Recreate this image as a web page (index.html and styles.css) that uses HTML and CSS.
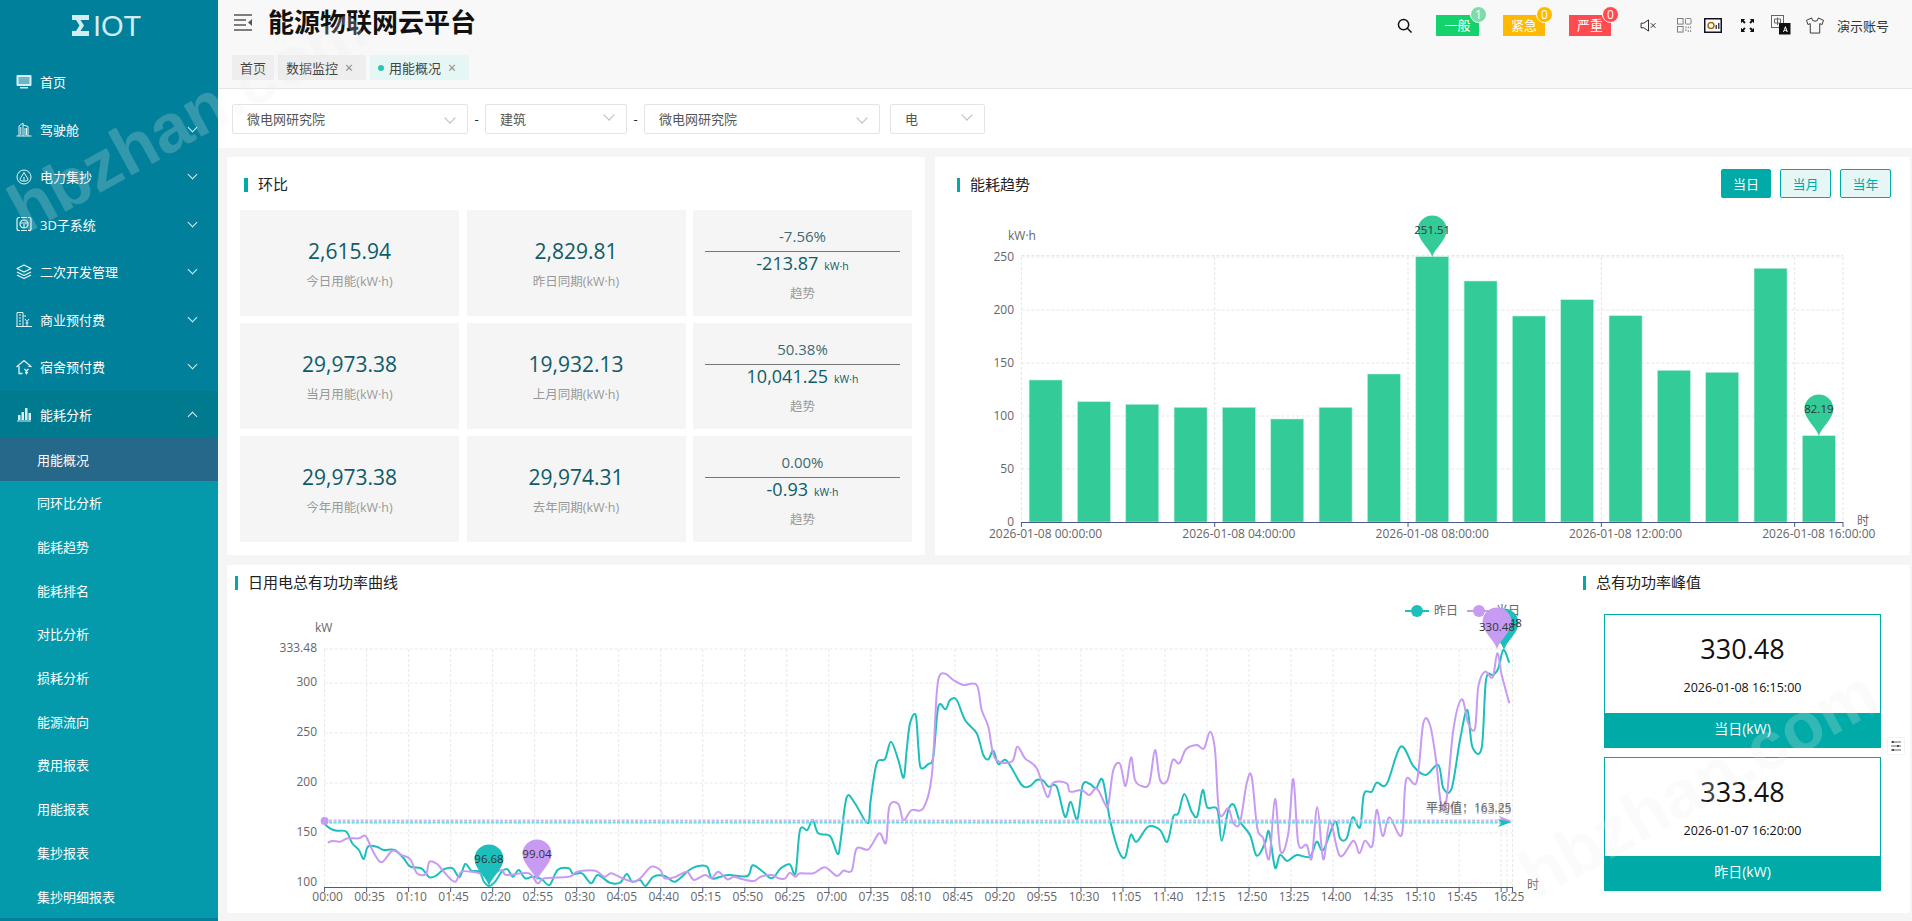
FILE: index.html
```html
<!DOCTYPE html>
<html lang="zh-CN">
<head>
<meta charset="utf-8">
<title>能源物联网云平台</title>
<link rel="stylesheet" href="styles.css">
</head>
<body>
<aside class="side">
  <div class="logo"><svg class="logo-x" viewBox="0 0 17 21"><path d="M0 0h17v5H8.500l3.500 5.500L8.500 16H17v5H0v-5h4l3.500-5.500L4 5H0z" fill="#d3ecef"/></svg>IOT</div>
  <nav class="menu">
    <a class="item"><svg class="ico" viewBox="0 0 16 16"><rect x=".5" y="1" width="15" height="11" rx="1" fill="#d6eef2"/><rect x="2.500" y="3" width="11" height="7" fill="#6db7c4"/><path d="M4 13h8v1.500H4z" fill="#d6eef2"/></svg><span>首页</span></a>
    <a class="item"><svg class="ico" viewBox="0 0 16 16" fill="none" stroke="#e4f4f6"><path d="M.5 15h15M3 15V5l4-3v13M7 4l5 1.500V15M9 7v7M10.500 7v7M4.800 6v8"/></svg><span>驾驶舱</span><i class="chev"></i></a>
    <a class="item"><svg class="ico" viewBox="0 0 16 16" fill="none" stroke="#e4f4f6"><circle cx="8" cy="8" r="7"/><path d="M8 3.500l4 6.500a2 2 0 0 1-2 2H6a2 2 0 0 1-2-2z"/><path d="M8 8v4"/></svg><span>电力集抄</span><i class="chev"></i></a>
    <a class="item"><svg class="ico" viewBox="0 0 16 16" fill="none" stroke="#e4f4f6" stroke-width="1.2"><path d="M4 1.500H3A2 2 0 0 0 1 3.500v9a2 2 0 0 0 2 2h1M12 1.500h1a2 2 0 0 1 2 2v9a2 2 0 0 1-2 2h-1M5 1.500h6M5 14.500h6"/><circle cx="8" cy="8" r="4"/><path d="M4.500 7h7M8 8v4"/></svg><span>3D子系统</span><i class="chev"></i></a>
    <a class="item"><svg class="ico" viewBox="0 0 16 16" fill="none" stroke="#e4f4f6" stroke-width="1.3" stroke-linejoin="round"><path d="M8 1l7 3.500L8 8 1 4.500z"/><path d="M1 8l7 3.500L15 8"/><path d="M1 11l7 3.500L15 11"/></svg><span>二次开发管理</span><i class="chev"></i></a>
    <a class="item"><svg class="ico" viewBox="0 0 16 16" fill="none" stroke="#e4f4f6"><path d="M0 15.500h16M1 15V1.500h6V15M3 4h2M3 7h2M3 10h2M3 13h2M7 5h3M9 8l2 2.500L13 8M11 10.500V15M9.500 12h3"/></svg><span>商业预付费</span><i class="chev"></i></a>
    <a class="item"><svg class="ico" viewBox="0 0 16 16" fill="none" stroke="#e4f4f6" stroke-width="1.3"><path d="M.5 8L8 1.500 15.500 8M3 7v7.500h3.500M13 7v1"/><path d="M8.500 10l2 2 2-2M10.500 12v3.500M9 13.500h3"/></svg><span>宿舍预付费</span><i class="chev"></i></a>
    <a class="item open"><svg class="ico" viewBox="0 0 16 16" fill="#d6eef2"><path d="M1 14.500h14v1H1z"/><rect x="2" y="9" width="2.500" height="5"/><rect x="5.500" y="6" width="2.500" height="8"/><rect x="9" y="2" width="2.500" height="12"/><rect x="12.500" y="7" width="2.500" height="7"/></svg><span>能耗分析</span><i class="chev up"></i></a>
    <div class="sub">
      <a class="sub-item on">用能概况</a>
      <a class="sub-item">同环比分析</a>
      <a class="sub-item">能耗趋势</a>
      <a class="sub-item">能耗排名</a>
      <a class="sub-item">对比分析</a>
      <a class="sub-item">损耗分析</a>
      <a class="sub-item">能源流向</a>
      <a class="sub-item">费用报表</a>
      <a class="sub-item">用能报表</a>
      <a class="sub-item">集抄报表</a>
      <a class="sub-item">集抄明细报表</a>
    </div>
  </nav>
</aside>

<main class="main">
  <header class="top">
    <div class="top-row">
      <svg class="burger" viewBox="0 0 19 17" fill="none" stroke="#555" stroke-width="1.4"><path d="M0 1h18M0 6h12M0 11h12M0 16h18"/><path d="M18 5l-4 3.500 4 3.500z" fill="#555" stroke="none"/></svg>
      <h1 class="brand">能源物联网云平台</h1>
      <div class="tools">
        <svg class="search" viewBox="0 0 16 16" fill="none" stroke="#111" stroke-width="1.6"><circle cx="7" cy="7" r="5.500"/><path d="M11 11l4.500 4.500"/></svg>
        <div class="alarm green">一般<b class="dot pale">1</b></div>
        <div class="alarm amber">紧急<b class="dot amber">0</b></div>
        <div class="alarm red">严重<b class="dot red">0</b></div>
        <svg class="tool t-mute" viewBox="0 0 18 14" fill="none" stroke="#222"><path d="M1 4.500h3L9 1v12L4 9.500H1zM11.500 4.500l5 5M16.500 4.500l-5 5"/></svg>
        <svg class="tool t-qr" viewBox="0 0 16 16" fill="none" stroke="#777"><rect x=".5" y=".5" width="6" height="6"/><rect x="9" y=".5" width="6" height="6" rx="1"/><rect x=".5" y="9" width="6" height="6"/><path d="M9.500 9v6M12 9v2M12 13v2M14.500 9v2M14.500 13v2" stroke-dasharray="2 1"/></svg>
        <svg class="tool t-dash" viewBox="0 0 18 15"><rect x=".75" y=".75" width="16.500" height="13.500" fill="#fff" stroke="#112" stroke-width="1.500"/><circle cx="7" cy="7.500" r="3" fill="none" stroke="#b06a10" stroke-width="1.500"/><path d="M11.500 11V7h1.500v4zM14 11V5h1.500v6z" fill="#445"/></svg>
        <svg class="tool t-full" viewBox="0 0 14 14" fill="#111"><path d="M0 0h4.500L3 1.500 5 3.500 3.500 5 1.500 3 0 4.500zM14 0v4.500L12.500 3l-2 2L9 3.500l2-2L9.500 0zM0 14V9.500L1.500 11l2-2L5 10.500l-2 2L4.500 14zM14 14H9.500l1.500-1.500-2-2L10.500 9l2 2L14 9.500z"/></svg>
        <svg class="tool t-lang" viewBox="0 0 20 20"><rect x=".5" y=".5" width="12" height="12" fill="#f8f8f8" stroke="#666"/><rect x="8" y="8" width="11.500" height="11.500" fill="#111"/><path d="M3.500 4h6v4h-6zM6.500 2.500v7.500" fill="none" stroke="#666"/><path d="M12 17l2-5.500h.8L16.800 17h-1.200l-.4-1.200h-1.900l-.4 1.200zM13.600 14.900h1.300l-.6-1.900z" fill="#fff"/></svg>
        <svg class="tool t-shirt" viewBox="0 0 20 18" fill="none" stroke="#333"><path d="M6.500 1L1 3.500 2.500 8 5 7v10h10V7l2.500 1L19 3.500 13.500 1a3.500 3.500 0 0 1-7 0z"/></svg>
        <span class="user">演示账号</span>
      </div>
    </div>
    <div class="tabs">
      <a class="tab">首页</a>
      <a class="tab">数据监控<i class="x">×</i></a>
      <a class="tab active"><i class="tab-dot"></i>用能概况<i class="x">×</i></a>
    </div>
  </header>

  <div class="filters">
    <div class="sel s1">微电网研究院<i class="sel-chev"></i></div>
    <span class="dash">-</span>
    <div class="sel s2">建筑<i class="sel-chev high"></i></div>
    <span class="dash">-</span>
    <div class="sel s1">微电网研究院<i class="sel-chev"></i></div>
    <div class="sel s3">电<i class="sel-chev high"></i></div>
  </div>

  <div class="content">
    <div class="row-top">
      <section class="card card-ratio">
        <h2 class="ttl">环比</h2>
        <div class="tiles">
          <div class="tile"><div class="num">2,615.94</div><div class="lab">今日用能(kW·h)</div></div>
          <div class="tile"><div class="num">2,829.81</div><div class="lab">昨日同期(kW·h)</div></div>
          <div class="tile trend"><div class="pct">-7.56%</div><div class="val">-213.87<small>kW·h</small></div><div class="lab">趋势</div></div>
          <div class="tile"><div class="num">29,973.38</div><div class="lab">当月用能(kW·h)</div></div>
          <div class="tile"><div class="num">19,932.13</div><div class="lab">上月同期(kW·h)</div></div>
          <div class="tile trend"><div class="pct">50.38%</div><div class="val">10,041.25<small>kW·h</small></div><div class="lab">趋势</div></div>
          <div class="tile"><div class="num">29,973.38</div><div class="lab">今年用能(kW·h)</div></div>
          <div class="tile"><div class="num">29,974.31</div><div class="lab">去年同期(kW·h)</div></div>
          <div class="tile trend"><div class="pct">0.00%</div><div class="val">-0.93<small>kW·h</small></div><div class="lab">趋势</div></div>
        </div>
      </section>
      <section class="card card-trend">
        <div class="trend-head">
          <h2 class="ttl flat">能耗趋势</h2>
          <div class="btns"><button class="btn on">当日</button><button class="btn">当月</button><button class="btn">当年</button></div>
        </div>
        <svg id="barChart" class="chart" viewBox="935 198 975 357"></svg>
      </section>
    </div>
    <section class="card row-bottom">
      <div class="power">
        <h2 class="ttl low">日用电总有功功率曲线</h2>
        <svg id="lineChart" class="chart line" viewBox="227 600 1343 313"></svg>
      </div>
      <div class="peak">
        <h2 class="ttl low">总有功功率峰值</h2>
        <div class="peak-box"><div class="peak-body"><div class="peak-num">330.48</div><div class="peak-time">2026-01-08 16:15:00</div></div><div class="peak-foot">当日(kW)</div></div>
        <div class="peak-box"><div class="peak-body"><div class="peak-num">333.48</div><div class="peak-time">2026-01-07 16:20:00</div></div><div class="peak-foot">昨日(kW)</div></div>
      </div>
    </section>
  </div>
</main>

<div class="float-tool"><svg viewBox="0 0 12 12" fill="none" stroke="#666" stroke-width="1.2"><path d="M1 2h10M1 6h10M1 10h10"/><path d="M3 1v2M8 5v2M3 9v2" stroke="#333" stroke-width="1.600"/></svg></div>
<div class="mark mark-a">hbzhan.com</div>
<div class="mark mark-b">hbzhan.com</div>
<script src="chart.js"></script>
</body>
</html>
```
FILE: styles.css
```css
* { box-sizing: border-box; }
html, body { margin: 0; height: 921px; overflow: hidden; }
body {
  display: flex;
  position: relative;
  background: #f5f5f5;
  font-family: "Open Sans", "Noto Sans CJK SC", sans-serif;
  color: #333;
}
i { font-style: normal; }
h1, h2 { margin: 0; font-weight: 400; }

/* sidebar */
.side { width: 218px; flex: none; height: 921px; overflow: hidden; background: #00809a; color: #fff; }
.logo { height: 58px; padding: 9px 0 0 72px; display: flex; align-items: flex-start; font: 400 29px/34px "Liberation Sans", sans-serif; color: #d3ecef; }
.logo-x { width: 17px; height: 21px; margin: 6px 4px 0 0; flex: none; }
.item { height: 47.500px; display: flex; align-items: center; padding-left: 16px; font-size: 13px; position: relative; }
.item span { margin-left: 8px; }
.item.open { background: #007a8e; }
.ico { width: 16px; height: 16px; flex: none; }
.chev { position: absolute; left: 189px; top: 18px; width: 7px; height: 7px; border-right: 1px solid #d7eef1; border-bottom: 1px solid #d7eef1; transform: rotate(45deg); }
.chev.up { top: 22px; transform: rotate(225deg); }
.sub { background: #059aab; }
.sub-item { display: flex; align-items: center; height: 43.700px; padding-left: 37px; font-size: 13px; }
.sub-item.on { height: 43px; background: #25688a; }

/* main */
.main { flex: 1; min-width: 0; display: flex; flex-direction: column; }
.top { height: 89px; background: #f8f8f8; border-bottom: 1px solid #e6e6e6; padding-left: 14px; }
.top-row { display: flex; align-items: center; height: 50px; }
.burger { width: 19px; height: 17px; margin: -6px 0 0 2px; flex: none; }
.brand { margin: -8px 0 0 15px; font-size: 26px; font-weight: 700; color: #111; font-family: "Noto Sans CJK SC", sans-serif; line-height: 42px; }
.tools { margin-left: auto; display: flex; align-items: center; height: 50px; position: relative; width: 515px; flex: none; }
.search { width: 15px; height: 15px; flex: none; }
.alarm { position: relative; height: 21px; line-height: 21px; text-align: center; color: #fff; font-size: 13px; width: 43px; flex: none; }
.alarm.green { background: #14d26c; margin-left: 24px; }
.alarm.amber { background: #ffb900; margin-left: 24px; width: 42px; }
.alarm.red { background: #ff4b4f; margin-left: 24px; width: 42px; }
.dot { position: absolute; right: -8px; top: -9px; width: 17px; height: 17px; border-radius: 50%; border: 1px solid #fff; font: 400 12px/15px "Open Sans", sans-serif; color: #fff; text-align: center; }
.dot.pale { background: #7fdca8; }
.dot.amber { background: #ffb900; }
.dot.red { background: #ff4b4f; }
.tool { flex: none; }
.t-mute { width: 17px; height: 13px; margin-left: 29px; }
.t-qr { width: 15px; height: 15px; margin-left: 20px; }
.t-dash { width: 18px; height: 15px; margin-left: 12px; }
.t-full { width: 13px; height: 13px; margin-left: 19px; }
.t-lang { width: 20px; height: 20px; margin-left: 17px; }
.t-shirt { width: 20px; height: 17px; margin-left: 14px; }
.user { font-size: 13px; margin-left: 12px; color: #333; white-space: nowrap; }
.tabs { display: flex; gap: 4px; height: 25px; margin-top: 5px; }
.tab { display: flex; align-items: center; padding: 0 8px; background: #eeeeee; font-size: 13px; color: #444; }
.tab .x { font-size: 14px; color: #888; margin: 0 5px 0 7px; }
.tab.active { background: #e6f6f4; color: #444; }
.tab-dot { width: 6px; height: 6px; border-radius: 50%; background: #2dc4b8; margin-right: 5px; }

.filters { height: 59px; background: #fff; display: flex; align-items: center; padding-left: 14px; }
.sel { position: relative; height: 30px; line-height: 28px; border: 1px solid #e2e4e8; border-radius: 2px; padding-left: 14px; font-size: 13px; color: #555; flex: none; }
.s1 { width: 236px; }
.s2 { width: 142px; }
.s3 { width: 95px; margin-left: 10px; }
.dash { width: 17px; text-align: center; font-size: 13px; color: #222; }
.sel-chev { position: absolute; right: 13px; top: 9px; width: 8px; height: 8px; border-right: 1px solid #bbb; border-bottom: 1px solid #bbb; transform: rotate(45deg); }
.sel-chev.high { top: 6px; }

.content { flex: 1; min-height: 0; padding: 9px 2px 0 9px; display: flex; flex-direction: column; gap: 10px; }
.row-top { display: grid; grid-template-columns: 698px 1fr; gap: 10px; height: 398px; flex: none; }
.card { background: #fff; }
.ttl { display: flex; align-items: center; height: 16px; font-size: 15px; color: #222; }
.ttl::before { content: ""; width: 4px; height: 14px; background: #00aaa6; margin: 4px 10px 0 0; flex: none; }
.card-ratio { padding: 18px 13px 0; }
.card-ratio .ttl { margin-left: 4px; }
.tiles { margin-top: 19px; display: grid; grid-template-columns: repeat(3, 219px); grid-auto-rows: 106px; column-gap: 7.500px; row-gap: 7px; }
.tile { background: #f5f5f5; text-align: center; padding-top: 27px; }
.num { font-size: 21px; line-height: 28px; color: #0f5c68; }
.lab { font-size: 12.500px; line-height: 18px; color: #999; margin-top: 8px; }
.trend { padding-top: 16px; }
.pct { margin: 0 12px; padding-bottom: 5px; border-bottom: 1px solid #777; font-size: 15px; line-height: 20px; color: #3e6b72; }
.val { font-size: 18px; line-height: 26px; margin-top: -2px; color: #0f5c68; }
.val small { font-size: 10.500px; margin-left: 6px; }
.trend .lab { margin-top: 6px; }

.card-trend { display: flex; flex-direction: column; }
.trend-head { height: 41px; flex: none; display: flex; justify-content: space-between; padding: 12px 19px 0 22px; }
.ttl.flat { height: 16px; margin-top: 6px; }
.ttl.flat::before, .ttl.low::before { width: 3px; }
.btns { display: flex; gap: 9px; }
.btn { width: 51px; height: 29px; border: 1px solid #00aaa6; border-radius: 2px; background: #e6f6f4; color: #00aaa6; font: 13px "Noto Sans CJK SC", sans-serif; padding: 0; }
.btn.on { background: #00aaa6; color: #fff; width: 50px; }
.chart { display: block; }
#barChart { width: 975px; height: 357px; }

.row-bottom { height: 348px; flex: none; display: flex; }
.power { width: 1343px; flex: none; padding-top: 8px; }
.power .ttl { margin-left: 8px; }
.line { width: 1343px; height: 313px; margin-top: 11px; }
.peak { flex: 1; padding: 8px 0 0 13px; }
.peak-box { width: 277px; height: 134px; margin: 9px 0 0 21px; border: 1px solid #00aaa6; display: flex; flex-direction: column; }
.peak .ttl + .peak-box { margin-top: 25px; }
.peak-body { flex: 1; text-align: center; padding-top: 12px; }
.peak-num { font-size: 27px; line-height: 44px; color: #111; }
.peak-time { font-size: 12.500px; line-height: 18px; margin-top: 8px; color: #111; }
.peak-foot { height: 35px; line-height: 32px; background: #00aaa6; color: #fff; text-align: center; font-size: 14px; margin: 0 -1px -1px; }

.float-tool { position: absolute; left: 1888px; top: 738px; width: 16px; height: 16px; background: #fff; box-shadow: 0 0 2px #ddd; padding: 2px; }
.float-tool svg { display: block; width: 12px; height: 12px; }

.mark { position: absolute; font: 700 68px/1 "Liberation Sans", sans-serif; color: rgba(235, 235, 235, .22); white-space: nowrap; pointer-events: none; transform: rotate(-29deg); transform-origin: 0 100%; }
.mark-a { left: 30px; top: 175px; }
.mark-b { left: 1541px; top: 841px; }

/* chart pieces */
.chart text { font-family: "Open Sans", "Noto Sans CJK SC", sans-serif; font-size: 12px; fill: #666; }
.chart text.pin-t { fill: #333; font-size: 11.500px; }
.chart text.ghost { fill: #aaa; }
```
FILE: chart.js
```javascript
const NS = 'http://www.w3.org/2000/svg';
const TEAL = '#1cbfbb', PURPLE = '#c79bf2', GREEN = '#33cc99';

function add(svg, tag, attrs, text) {
  const n = document.createElementNS(NS, tag);
  for (const k in attrs) n.setAttribute(k, attrs[k]);
  if (text !== undefined) n.textContent = text;
  svg.appendChild(n);
  return n;
}
const hline = (s, x1, x2, y, st, dash) => add(s, 'line', { x1, x2, y1: y, y2: y, stroke: st, 'stroke-dasharray': dash || '' });
const vline = (s, x, y1, y2, st, dash) => add(s, 'line', { x1: x, x2: x, y1, y2, stroke: st, 'stroke-dasharray': dash || '' });
function pin(s, x, tip, color, label, dy) {
  add(s, 'path', { fill: color, transform: `translate(${x} ${tip})`, d: 'M0 0C-2-8-14.500-17-14.500-27A14.500 14.500 0 1 1 14.500-27C14.500-17 2-8 0 0Z' });
  add(s, 'text', { class: 'pin-t', x, y: tip - 23 + (dy || 0), 'text-anchor': 'middle' }, label);
}
function smooth(p) {
  let d = `M${p[0][0].toFixed(1)} ${p[0][1].toFixed(1)}`;
  for (let i = 0; i < p.length - 1; i++) {
    const a = p[i - 1] || p[i], b = p[i], c = p[i + 1], e = p[i + 2] || c;
    const k = 6;
    d += `C${(b[0] + (c[0] - a[0]) / k).toFixed(1)} ${(b[1] + (c[1] - a[1]) / k).toFixed(1)} ${(c[0] - (e[0] - b[0]) / k).toFixed(1)} ${(c[1] - (e[1] - b[1]) / k).toFixed(1)} ${c[0].toFixed(1)} ${c[1].toFixed(1)}`;
  }
  return d;
}

/* energy trend bars */
(function () {
  const s = document.getElementById('barChart');
  const x0 = 1021.4, x1 = 1843, y0 = 522, band = (x1 - x0) / 17, unit = 265 / 250;
  const tops = [380, 401.7, 404.3, 407.3, 407.3, 419, 407.3, 374, 256.7, 281, 316, 299.7, 315.7, 370.3, 372.3, 268.3, 435.7];
  const grid = '#e6e6e6';
  [50, 100, 150, 200, 250].forEach(v => hline(s, x0, x1, y0 - v * unit, grid, '3 2'));
  hline(s, x0, x1, y0 - 250 * unit - 1.5, grid, '3 2');
  for (let i = 0; i <= 4; i++) vline(s, x0 + i * 4 * band, 257, y0, grid, '3 2');
  vline(s, x1, 257, y0, grid, '3 2');
  [0, 50, 100, 150, 200, 250].forEach(v => add(s, 'text', { x: 1014, y: y0 - v * unit + 4, 'text-anchor': 'end' }, v));
  add(s, 'text', { x: 1008, y: 240 }, 'kW·h');
  tops.forEach((t, i) => {
    add(s, 'rect', { x: x0 + i * band + 7.7, y: t, width: 33, height: y0 - t, fill: GREEN, stroke: '#bfeedd', 'stroke-width': .6 });
  });
  hline(s, x0, x1, y0 + .5, '#4a5a85');
  ['00', '04', '08', '12', '16'].forEach((h, i) => {
    const x = x0 + i * 4 * band;
    vline(s, x, y0, y0 + 5, '#4a5a85');
    add(s, 'text', { x: x + band / 2, y: 538, 'text-anchor': 'middle' }, `2026-01-08 ${h}:00:00`);
  });
  vline(s, x1, y0, y0 + 5, '#4a5a85');
  add(s, 'text', { x: 1857, y: 525 }, '时');
  pin(s, x0 + 8 * band + 24.2, 257, GREEN, '251.51');
  pin(s, x0 + 16 * band + 24.2, 436, GREEN, '82.19');
})();

/* daily power curves: points are traced from the reference in three stretches */
(function () {
  const s = document.getElementById('lineChart');
  const A = (x, y) => [225 + x / 2.24, 560 + y / 3];
  const B = (x, y) => [800 + x / 3, 660 + y / 3];
  const C = (x, y) => [1160 + x / 3, 600 + y / 3];
  const build = (a, b, c) => [].concat(a.map(p => A(p[0], p[1])), b.map(p => B(p[0], p[1])), c.map(p => C(p[0], p[1])));

  const teal = build(
    [[222,790],[235,805],[250,812],[272,815],[285,850],[300,870],[311,897],[320,860],[340,860],[355,870],[380,870],[400,895],[415,920],[440,925],[458,952],[475,945],[490,928],[510,925],[525,952],[538,912],[552,932],[570,935],[580,965],[592,978],[605,965],[620,935],[633,928],[645,950],[658,930],[672,955],[690,950],[710,958],[727,975],[745,930],[770,925],[780,942],[800,940],[820,970],[835,945],[862,968],[885,968],[900,942],[912,965],[930,960],[942,978],[960,950],[985,948],[1008,965],[1040,930],[1060,918],[1080,920],[1090,955],[1110,950],[1130,945],[1170,948],[1182,916],[1205,935],[1225,955],[1245,925],[1265,913],[1278,940]],
    [[0,510],[22,510],[38,480],[55,520],[90,528],[113,582],[122,540],[140,412],[165,430],[203,490],[212,420],[230,310],[255,297],[273,245],[295,300],[311,353],[320,270],[330,190],[347,165],[355,260],[362,323],[385,312],[400,290],[415,140],[437,148],[450,120],[470,120],[495,180],[530,220],[550,285],[565,298],[580,272],[595,312],[620,302],[665,375],[690,378],[710,360],[730,362],[745,380],[770,380],[795,470],[812,425],[832,478],[848,375],[870,372],[888,385],[908,360],[930,480],[955,570],[975,592],[992,525],[1010,545],[1045,500]],
    [[0,690],[22,725],[40,650],[55,640],[73,582],[95,635],[112,648],[128,570],[142,622],[172,628],[185,722],[205,630],[222,615],[240,665],[270,705],[290,767],[315,730],[327,695],[345,803],[360,765],[382,783],[410,765],[450,770],[470,725],[490,750],[525,665],[540,715],[560,715],[578,652],[600,682],[612,582],[635,575],[650,548],[680,552],[722,440],[760,498],[797,525],[835,495],[850,565],[875,565],[900,420],[922,330],[937,440],[965,443],[978,240],[1000,225],[1015,205],[1030,150],[1048,188]]
  );
  const purple = build(
    [[230,848],[240,843],[258,845],[275,835],[300,835],[315,828],[330,870],[350,907],[375,872],[395,885],[415,898],[430,940],[450,942],[458,905],[475,912],[490,935],[515,965],[530,935],[560,937],[590,945],[620,930],[630,945],[680,940],[700,970],[715,955],[770,950],[785,938],[800,932],[830,932],[850,950],[865,940],[890,955],[915,965],[930,955],[955,920],[975,930],[985,955],[1010,950],[1035,935],[1050,960],[1075,945],[1090,955],[1105,935],[1125,958],[1140,950],[1160,958],[1185,963],[1200,950],[1225,945],[1240,955],[1255,955],[1265,938],[1278,950]],
    [[0,640],[40,640],[75,622],[110,648],[130,632],[155,632],[170,565],[205,568],[238,520],[258,548],[268,440],[295,432],[310,480],[335,450],[370,445],[395,350],[410,100],[420,45],[438,42],[460,60],[490,75],[530,75],[545,150],[565,200],[585,295],[635,305],[652,260],[675,295],[710,325],[742,410],[760,368],[800,370],[810,395],[845,390],[868,405],[890,385],[915,432],[925,435],[940,330],[960,312],[977,378],[993,292],[1005,360],[1025,378],[1048,370],[1065,270]],
    [[0,540],[22,542],[38,480],[58,490],[78,448],[110,435],[132,445],[150,395],[165,450],[178,640],[205,625],[220,670],[240,668],[260,550],[275,530],[292,685],[310,715],[328,775],[345,597],[362,755],[385,700],[400,537],[415,730],[440,735],[455,775],[472,622],[490,778],[510,665],[540,768],[580,722],[598,760],[615,722],[637,738],[650,630],[668,708],[688,652],[725,705],[738,540],[770,545],[790,370],[810,375],[828,480],[842,605],[858,610],[880,390],[905,298],[925,370],[945,385],[955,260],[975,215],[998,232],[1012,160],[1025,225],[1048,310]]
  );

  const x0 = 324.6, x1 = 1512.5, axisY = 887, step = 42.02, grid = '#e8e8e8';
  [649, 683, 733, 783, 833, 883].forEach(y => hline(s, x0, x1, y, grid, '3 2'));
  for (let i = 0; i <= 28; i++) vline(s, x0 + i * step, 649, axisY, grid, '3 2');
  vline(s, 1507, 649, axisY, grid, '3 2');
  vline(s, x1, 649, axisY, grid, '3 2');
  [[333.48, 649], [300, 683], [250, 733], [200, 783], [150, 833], [100, 883]].forEach(([v, y]) => add(s, 'text', { x: 317, y: y + 3, 'text-anchor': 'end' }, v));
  add(s, 'text', { x: 315, y: 632 }, 'kW');
  hline(s, x0, x1, axisY + .5, '#4a5a85');

  const tick = (x) => vline(s, x, axisY, axisY + 5, '#4a5a85');
  for (let i = 0; i <= 28; i++) {
    const x = x0 + i * step, m = i * 35;
    tick(x);
    if (i < 28) {
      const lab = String(Math.floor(m / 60)).padStart(2, '0') + ':' + String(m % 60).padStart(2, '0');
      add(s, 'text', { x: x + 3, y: 901, 'text-anchor': 'middle' }, lab);
    }
  }
  tick(1507); tick(x1);
  add(s, 'text', { x: 1509, y: 901, 'text-anchor': 'middle' }, '16:25');
  add(s, 'text', { x: 1527, y: 889 }, '时');

  add(s, 'path', { d: smooth(teal), fill: 'none', stroke: TEAL, 'stroke-width': 2, 'stroke-linejoin': 'round' });
  add(s, 'path', { d: smooth(purple), fill: 'none', stroke: PURPLE, 'stroke-width': 2, 'stroke-linejoin': 'round' });

  add(s, 'line', { x1: x0, x2: 1500, y1: 820.5, y2: 820.5, stroke: '#d3b4f5', 'stroke-width': 2, 'stroke-dasharray': '3 1.500' });
  add(s, 'line', { x1: x0, x2: 1500, y1: 822.5, y2: 822.5, stroke: '#5fdcd8', 'stroke-width': 2, 'stroke-dasharray': '3 1.500' });
  add(s, 'circle', { cx: x0, cy: 821, r: 4, fill: PURPLE });
  add(s, 'path', { d: 'M1499 816L1512 821 1499 824 1502 821z', fill: PURPLE });
  add(s, 'path', { d: 'M1498 827L1512 822 1498 819 1501 823z', fill: TEAL });
  add(s, 'text', { class: 'ghost', x: 1426, y: 813.5 }, '平均值：163.85');
  add(s, 'text', { x: 1426, y: 812 }, '平均值：163.25');

  hline(s, 1405, 1429, 611, TEAL).setAttribute('stroke-width', 2);
  add(s, 'circle', { cx: 1417, cy: 611, r: 6, fill: TEAL });
  add(s, 'text', { x: 1434, y: 615 }, '昨日');
  hline(s, 1467, 1491, 611, PURPLE).setAttribute('stroke-width', 2);
  add(s, 'circle', { cx: 1479, cy: 611, r: 6, fill: PURPLE });
  add(s, 'text', { x: 1496, y: 615 }, '当日');

  pin(s, 489, 886, TEAL, '96.68');
  pin(s, 537, 881, PURPLE, '99.04');
  pin(s, 1504, 650, TEAL, '333.48');
  pin(s, 1497, 649, PURPLE, '330.48', 5);
})();
```
